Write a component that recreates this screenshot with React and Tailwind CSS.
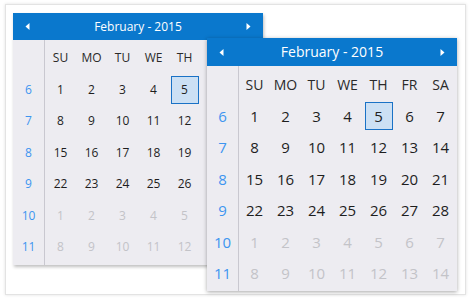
const days = ["SU", "MO", "TU", "WE", "TH", "FR", "SA"];

const weeks = [
  { no: 6, days: [1, 2, 3, 4, 5, 6, 7], other: false },
  { no: 7, days: [8, 9, 10, 11, 12, 13, 14], other: false },
  { no: 8, days: [15, 16, 17, 18, 19, 20, 21], other: false },
  { no: 9, days: [22, 23, 24, 25, 26, 27, 28], other: false },
  { no: 10, days: [1, 2, 3, 4, 5, 6, 7], other: true },
  { no: 11, days: [8, 9, 10, 11, 12, 13, 14], other: true },
];

const Arrow = ({ dir }) => (
  <svg width="5" height="7" viewBox="0 0 5 7" className="block">
    {dir === "left" ? <path d="M4.5 0 L0.5 3.5 L4.5 7 Z" fill="#fff" /> : <path d="M0.5 0 L4.5 3.5 L0.5 7 Z" fill="#fff" />}
  </svg>
);

const Calendar = ({ big }) => {
  const text = big ? "text-[15px]" : "text-[12px]";
  return (
    <div
      className={`w-[250px] bg-[#edecf1] ${big ? "shadow-[0_1px_4px_rgba(0,0,0,0.35)]" : "shadow-[1px_2px_3px_rgba(0,0,0,0.25)]"}`}
    >
      <div className={`flex items-center justify-between bg-[#0a78cd] text-white px-[12px] ${big ? "h-[28px] text-[14px]" : "h-[27px] text-[12px]"}`}>
        <Arrow dir="left" />
        <span className="leading-none">February - 2015</span>
        <Arrow dir="right" />
      </div>
      <div className="flex">
        <div className="w-[32px] border-r border-[#c9c8d0] pt-[2px] pb-[2px]">
          <div className="h-[32px]" />
          {weeks.map((w) => (
            <div key={w.no} className={`h-[31.5px] flex items-center justify-center text-[#3d95f0] ${text}`}>
              {w.no}
            </div>
          ))}
        </div>
        <div className="grid grid-cols-7 w-[217px] pt-[2px] pb-[2px]">
          {days.map((d) => (
            <div key={d} className={`h-[32px] flex items-center justify-center text-[#2a2a2a] ${big ? "text-[14px]" : "text-[12px]"}`}>
              {d}
            </div>
          ))}
          {weeks.map((w) =>
            w.days.map((n, i) => {
              const sel = !w.other && n === 5;
              return (
                <div key={w.no + "-" + i} className={`h-[31.5px] flex items-center justify-center ${text}`}>
                  <span
                    className={`w-[28px] h-[28px] flex items-center justify-center ${
                      sel ? "bg-[#cce0f4] border border-[#1a72c6] text-[#222]" : w.other ? "text-[#c3c3c8]" : "text-[#1e1e1e]"
                    }`}
                  >
                    {n}
                  </span>
                </div>
              );
            })
          )}
        </div>
      </div>
    </div>
  );
};

const App = () => {
  return (
    <div className="w-[470px] h-[300px] bg-white pl-[5px] pt-[4px]" style={{ fontFamily: '"Open Sans", "Noto Sans", sans-serif' }}>
      <div className="relative w-[461px] h-[291px] bg-white border border-[#e3e3e3] shadow-[0_0_3px_rgba(0,0,0,0.12)] pl-[7px] pt-[8px]">
        <Calendar />
        <div className="absolute left-[201px] top-[33px]">
          <Calendar big />
        </div>
      </div>
    </div>
  );
};

export default App;
